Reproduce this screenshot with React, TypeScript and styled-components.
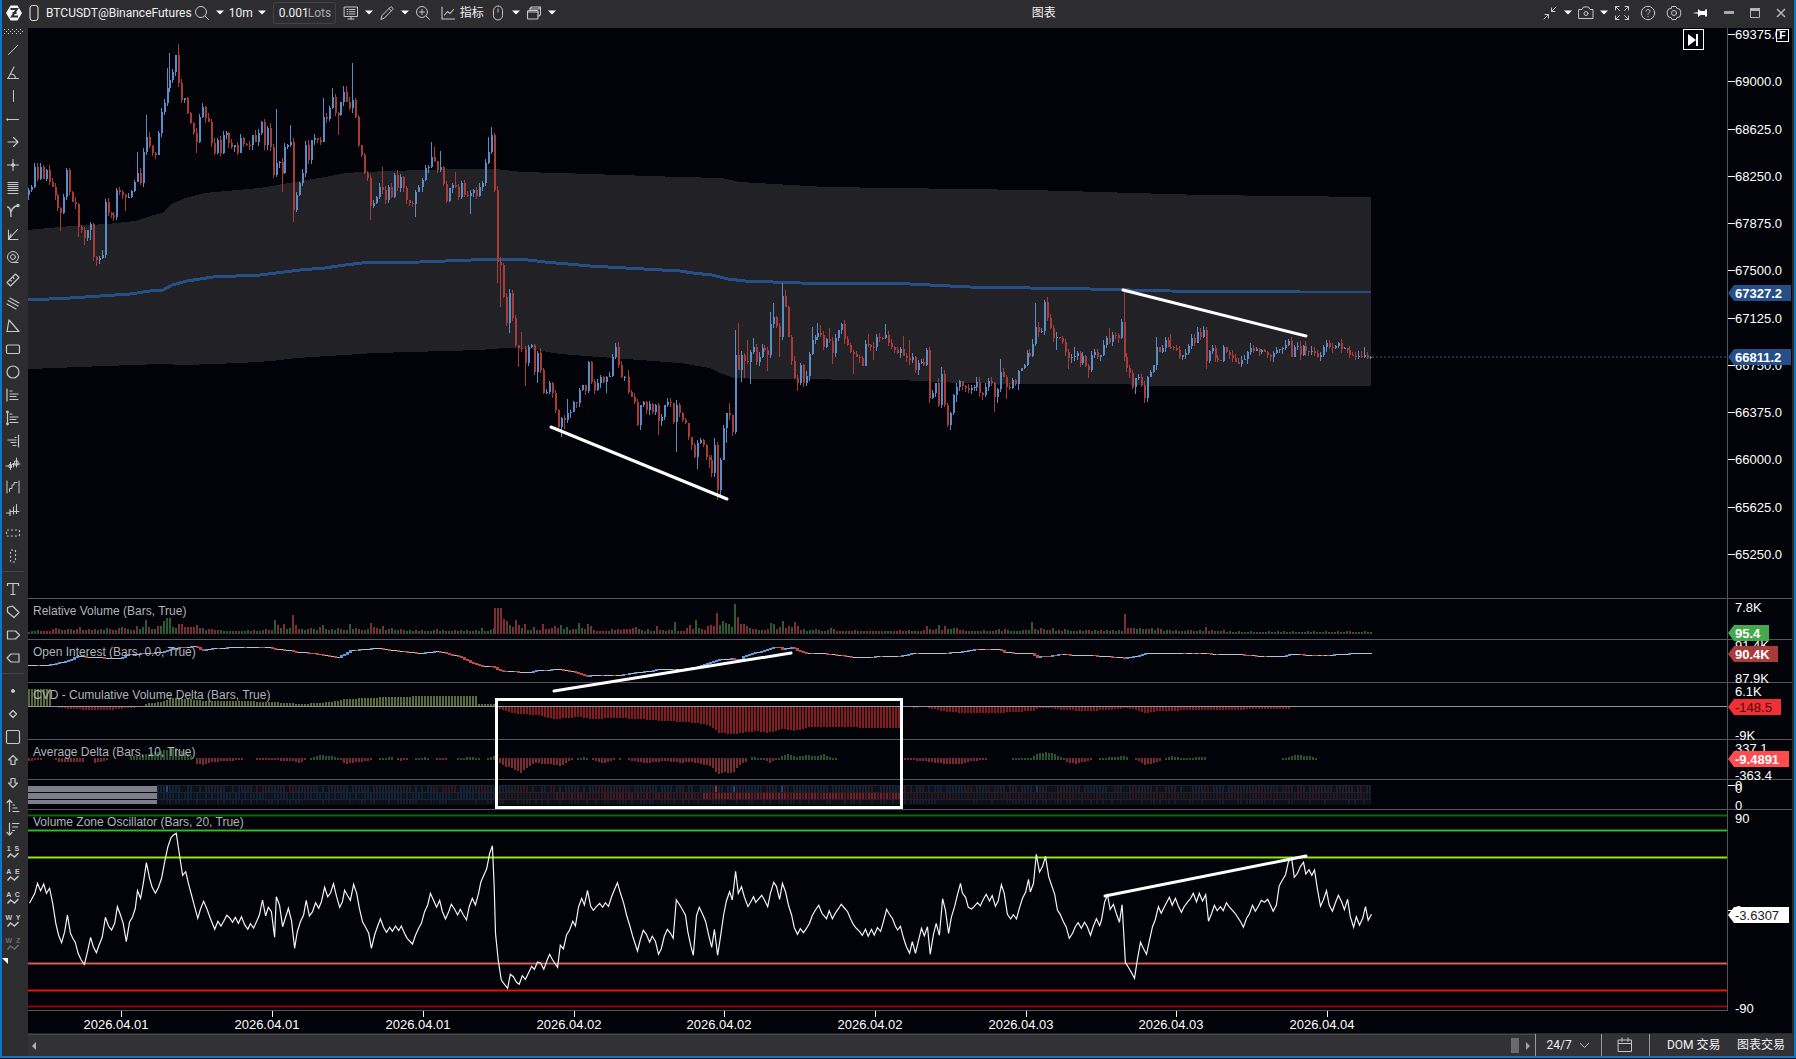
import React from "react";
import styled, { createGlobalStyle, css } from "styled-components";

/* ------------------------------------------------------------------ */
/* Theme                                                               */
/* ------------------------------------------------------------------ */

const color = {
  accent: "#0a78c8",
  chrome: "#2d2d30",
  status: "#323236",
  canvas: "#020308",
  line: "#55565c",
  icon: "#c6c6c8",
  up: "#5a8cc8",
  down: "#a83c38",
  band: "#222226",
  vwap: "#264f88",
};

const uiFont = `Roboto, "Noto Sans CJK SC", sans-serif`;
const chartFont = `"Liberation Sans", Arial, sans-serif`;

const GlobalStyle = createGlobalStyle`
  *, *::before, *::after { box-sizing: border-box; }
  body { margin: 0; background: #06121c; overflow: hidden; }
  button, input, select { font: inherit; color: inherit; margin: 0; }
`;

/* ------------------------------------------------------------------ */
/* Series data                                                         */
/* ------------------------------------------------------------------ */

type Point = [number, number];

const parsePoints = (src: string, x0 = 0, sx = 1, y0 = 0, sy = 1): Point[] =>
  src
    .trim()
    .split(/\s+/)
    .map((p) => {
      const [x, y] = p.split(",").map(Number);
      return [x0 + x / sx, y0 + y / sy] as Point;
    });

const toPath = (pts: Point[]) => pts.map(([x, y]) => `${x.toFixed(1)},${y.toFixed(1)}`).join(" ");

const sample = (pts: Point[], x: number) => {
  if (x <= pts[0][0]) return pts[0][1];
  for (let i = 1; i < pts.length; i++) {
    if (x <= pts[i][0]) {
      const [xa, ya] = pts[i - 1];
      const [xb, yb] = pts[i];
      return ya + ((yb - ya) * (x - xa)) / (xb - xa || 1);
    }
  }
  return pts[pts.length - 1][1];
};

const noise = (n: number) => {
  const v = Math.sin(n * 12.9898 + 4.1) * 43758.5453;
  return v - Math.floor(v);
};

/* Closes are in thirds of a pixel below `top`; ^ sets the high, _ sets the low. */
interface Run {
  from: number;
  to: number;
  top: number;
  closes: string;
}

const runs: Run[] = [
  {
    from: 28,
    to: 367,
    top: 0,
    closes: `570_601 560 500 538 500 538 510 545 560 585 625 640_692 590 510 575 605 612 680_712 690 715_735 690 672_720
      770 780_798 775 765 605 640 645 650 570 575 585 590_632 590 572 545 518^455 550 455 410^345 438 458 465 400
      335 310 265^205 240^160 215 165 250^133 300 295 340 370 400 425_460 350 320 355 365 430 460 420 460 405 400
      430 440 436 460 415 432 435 436 405 425 400 365 435 385 440 525 490^328 485 520_575 440 435 425^375
      630_665 585 550 520 435 480 420 415 420 425 350^295 358 325 290^265 340 345_405 305 275^258 305^258 325 300^190
      350 435 465 520 535`,
  },
  {
    from: 370,
    to: 679,
    top: 80,
    closes: `378_420 370 350 320 330^262 360 320 350 285 325 290 325 360 368 372 335_410 322 300 265 262 230^187 243^200
      270 260^212 312 362 325 315 320^275 350 310 345 348 340_402 330 348 320 310 250 215^170 165^140 330
      545_610 555_680 650 730 640_760 715 795 805_862 808^755 850_917 800 795 875 820_910 870 940 935 910 940 990
      1040 1015_1070 1020_1048 1000^957 995 965 968 930 915 932 845 905 930 910 890 905 890_940 888 830 800 855 890
      890 935^870 950 965 1035 975 965 990 972 995 975 1022_1065 1010 975 965 970 1025 975_1115 1000`,
  },
  {
    from: 682,
    to: 1056,
    top: 250,
    closes: `510 520 560 585 620 580_658 570 585 622 630_655 670 585^565 720_750 630_735 535 490_580 495^460 545
      315^240 360^220 315_395 333_385 335^270 305_403 290^265 335 320 295 300 315_362 222^187 200^158 228 260_320
      138^100 170^120 260 332 385 400_422 345 400 378 312 270^232 262 248^218 255^225 290 268 272^235 308_342 265 240
      222 268 285 305 312_372 320 325 348 282 285^252 290 292_330 262 264 265 255^222 280 292 300 310 298 318^258 325
      330^270 320 360 338 335 345 300 445_458 430 400 465 372^352 465 525 490_540 435 410_455 393 408 415 420 413 412
      395 430 435_450 410 393 400 440_485 418_460 365^328 380 410_448 415 390 402 362_420 355 345 310 318 282 230^158
      245 243 155^150 205 235 265 262_300`,
  },
  {
    from: 1059,
    to: 1370,
    top: 260,
    closes: `235 245 275 295_328 290 289^262 280 308 288 318 330_355 285 277 290 285 255 235 245^205 225 226 235 185
      290^95 325 340 380 355_402 350 375 415 352 335 315 262^232 275 265 240 260 262^222 265 270 292 285 280 258 235
      250 215^200 230 210 302_328 272 265 295 300 302 262 275 285 295 305 312 300 298 275 265 272 268 275 270 275
      285 292 280 270 268 265 255 242 290 262 258 285 258 272 274 272 278 292 284 262 248 262 265 258 250 268 265 270
      285 288 290 288 290 285^262 295 292`,
  },
];

interface Candle {
  x: number;
  open: number;
  close: number;
  high: number;
  low: number;
}

const candles: Candle[] = (() => {
  const out: Candle[] = [];
  let prev = 195;
  runs.forEach((run) => {
    const items = run.closes.trim().split(/\s+/);
    const step = (run.to - run.from) / (items.length - 1);
    items.forEach((item, i) => {
      const m = /^(\d+)([\^_])?(\d+)?$/.exec(item)!;
      const close = run.top + Number(m[1]) / 3;
      const n = out.length;
      let high = Math.min(prev, close) - noise(n) * 5;
      let low = Math.max(prev, close) + noise(n + 700) * 5;
      if (m[2] === "^") high = run.top + Number(m[3]) / 3;
      if (m[2] === "_") low = run.top + Number(m[3]) / 3;
      out.push({ x: Math.round(run.from + i * step), open: prev, close, high, low });
      prev = close;
    });
  });
  return out;
})();

const bandTop = parsePoints(`28,230 71,226 107,224 135,221 150,216 162,213 170,205 185,198 205,193 215,192 260,188 295,182
  325,177 345,173 362,172 420,170 460,169 495,169 522,172 560,173 680,177 722,178 740,182 825,187 1031,190 1203,195 1371,197`);
const bandBottom = parsePoints(`28,369 55,368 78,367 133,365 160,364 185,365 240,363 272,361 297,358 375,353 480,350 505,348
  530,349 560,354 600,357 680,363 710,368 722,374 735,378 760,379 900,380 960,383 1010,384 1125,384 1145,386 1371,386`);
const vwap = parsePoints(`28,300 70,298 100,296 130,294 150,291 163,290 172,285 187,281 213,277 260,275 300,270 325,268 345,265
  362,263 420,262 497,259 520,259 545,262 590,266 680,271 693,273 712,275 728,279 745,281 800,283 910,284 970,287 1030,288
  1090,289 1170,291 1300,292 1371,292`);

/* Bar heights in pixels; negative bars are sellers. */
const volumeLeft = `1 2 2 3 -2 -2 -2 -2 -4 -5 -4 3 -3 4 -4 3 -4 -6 3 -3 -4 3 -4 3 -4 3 5 -4 -3 3 -5 6 -5 4 -3 3 -7 4 6 13 -6 4 4 -7 7 12
  15 15 6 5 -9 -9 -6 -6 -6 -6 -8 5 -5 3 -4 -4 -3 -3 3 2 2 2 2 2 -2 2 2 3 2 -3 2 2 -3 4 -3 3 13 -8 5 -9 4 5 -18 -8 -4 4 3 4 -5 4 3
  -6 8 4 -3 4 3 5 -4 -3 3 9 4 -5 4 -3 3 4 -10 -6 -5 4 -7 3 -4 5 3 3 -4 3 2 3 2 -3 2 3 -2 2 2 3 -4 2 3 -2 2 2 -3 2 3 2 3 -2 2 3 2 5
  2 2 3 5 5`;
const volumeMid = `-25 -25 -25 -14 -12 8 -6 -13 -8 5 -9 3 3 -6 3 -3 -9 -4 -4 -5 -7 -5 8 4 6 3 -4 4 10 5 -4 9 -7 -3 -2 -2 -2 -2 2 -4 3 -4 -3 -4 -4
  -4 -5 -6 4 3 -2 4 -2 2 -7 3 -3 2 -3 3 11 -2 -2 -2 -5 -8 -4 13 5 -4 -3 -7 -8 -7 -20 8 12 10 9 6 29 -16 -9 -9 -7 5 -4 -4 3 3 -3
  -4 10 9 -4 -6 12 -5 -7 6 -11 -7 -3 4 2 3 3 -4 3 2 2 -3 5 4 -2 -2 2 -2 -2 2 -3 2 -2 2 -2 2 -2 -2 2 -2 2 2 2 -2 -2 2 -3 -2 -3 2 -3`;
const volumeRight = `-3 -2 -2 3 -2 2 -2 2 -3 -7 4 -3 -4 8 -3 -7 4 4 5 -5 -3 -3 2 -2 2 2 2 -2 3 2 -2 2 -3 4 2 -4 3 2 2 2 2 3 -3 3 11 -4 3 -5 4 -3 -3 5 2 -3
  2 -4 3 2 2 -2 3 2 -3 -3 2 3 2 -3 2 3 2 -3 2 3 2 -19 -5 -5 -5 4 5 -4 4 -4 5 3 -5 4 2 3 -3 2 3 -2 2 2 3 -3 2 2 3 2 -6 2 -3 2 2 2 -3
  1 2 1 -1 2 1 1 1 2 1 1 1 -1 1 2 1 -1 2 -1 2 1 1 2 -1 1 1 -1 2 1 2 -1 1 1 2 1 -1 1 -2 1 1 2 -2 1 1 1 -1 2 1 1 2 1 1 -1 1`;

const parseBars = (src: string, from: number, until: number) =>
  src
    .trim()
    .split(/\s+/)
    .map((h, i) => ({ x: from + i * 3, h: Number(h) }))
    .filter((b) => b.x < until);

const volumeBars = [
  ...parseBars(volumeLeft, 28, 494),
  ...parseBars(volumeMid, 494, 899),
  ...parseBars(volumeRight, 899, 1372),
];

const openInterest: Point[] = [
  ...parsePoints(
    "86,286 110,285 160,283 180,278 215,268 235,258 300,262 370,264 385,252 430,250 450,250 490,245 530,233 590,228 610,240 645,235 720,230 815,230 830,237 870,240 900,246",
    0, 3, 570, 3
  ),
  ...parsePoints("315,653 340,657 352,650 378,648 420,653 440,651 460,656"),
  ...parsePoints(
    "0,226 45,228 60,240 100,244 150,246 180,240 240,237 290,245 325,257 370,254 425,255 470,246 510,243 545,236 610,237 650,230 685,220 720,208 765,205 780,210 800,195 850,182 900,168 910,178 940,170 960,182 990,190 1040,190 1090,196 1120,200 1250,199",
    480, 3, 590, 3
  ),
  ...parsePoints(
    "0,199 40,190 120,190 150,188 180,185 230,178 305,178 320,187 400,189 412,200 450,198 480,193 550,194 620,198 680,203 720,197 740,190 920,190 980,192 1050,194 1070,197 1160,197 1170,193 1260,194 1340,193 1350,190 1415,190",
    900, 3, 590, 3
  ),
];

/* Envelope of the cumulative delta: positive grows up, negative down. */
const cvd = parsePoints(`28,17 50,17 51,0 55,0 56,-1 90,-3 110,-3 125,-1 142,0 143,2 160,4 170,8 185,7 205,5 240,5 270,4 300,2 330,4 345,7
  390,9 430,10 475,10 476,2 494,2 496,-1 507,-5 520,-7 537,-8 547,-11 557,-12 577,-10 590,-12 613,-11 637,-12 663,-14 683,-15 703,-17
  713,-21 717,-26 733,-27 757,-24 767,-26 783,-22 793,-24 810,-20 902,-21 903,0 911,0 914,-1 922,0 928,-1 940,-4 960,-6 997,-6 1033,-4
  1037,-1 1050,-1 1060,-3 1087,-4 1107,-3 1127,-1 1137,-4 1145,-6 1157,-4 1200,-3 1287,-2 1290,-1 1292,0 1371,0`);
const averageDelta = parsePoints(`28,-2 40,-1 44,0 54,0 56,-3 83,-3 85,0 91,0 94,-4 104,-2 110,0 128,0 130,3 140,3 150,6 165,9 172,12 180,8 190,3 193,0
  196,-5 203,-6 212,-3 240,-1 244,0 290,-2 300,-4 306,0 320,4 335,2 345,-5 365,-2 375,0 390,2 400,-2 410,0 425,2 430,0 440,-1 452,0 470,2 484,0
  494,3 495,-2 503,-7 513,-10 520,-14 526,-9 533,-4 547,-5 560,-7 567,-3 572,0 584,2 590,0 594,-2 603,-4 612,-1 618,1 625,0 632,-2 645,-4 655,-3
  665,-2 680,-4 688,-3 700,-5 710,-7 717,-15 725,-13 732,-15 737,-7 745,-3 750,2 763,1 768,-4 775,-1 780,3 787,5 795,2 808,4 816,2 822,5 832,1
  840,0 900,0 905,-1 925,-2 935,-4 945,-5 960,-5 970,-2 985,-1 990,0 1030,1 1036,5 1045,7 1053,5 1063,1 1066,-3 1075,-5 1090,-1 1100,1 1123,3
  1130,0 1138,-2 1143,-6 1155,-4 1160,-1 1170,3 1180,1 1205,2 1207,0 1275,0 1285,1 1295,4 1310,3 1317,0 1371,0`);

const oscillator: Point[] = [
  ...parsePoints(
    `66,310 78,280 84,250 91,272 98,252 104,280 111,265 118,310 125,370 131,405 138,428 145,395 151,345 158,400 163,415 169,428
    175,460 182,480 189,493 196,455 203,412 209,440 216,458 222,435 229,412 236,352 243,378 250,390 257,370 263,320 270,345 276,370
    283,425 290,367 297,350 303,325 308,272 315,295 321,250 328,188 335,235 341,262 348,280 355,262 362,235 369,185 376,140 383,113
    388,106 395,100 402,165 409,226 416,215 422,250 429,285 436,320 443,355 449,328 456,304 463,325 471,355 481,388 488,364 495,378
    501,364 508,346 514,353 521,367 527,352 534,370 541,350 548,374 555,388 561,371 568,384 575,364 581,345 588,300 595,348 601,322
    608,335 615,412 619,290 626,315 633,380 640,350 646,325 653,362 660,445 666,395 673,365 680,345 686,301 693,348 700,335 707,308
    714,325 720,305 727,262 734,290 740,280 747,251 754,290 761,322 767,305 772,271 779,288 785,301 792,253 799,280 805,325 812,365
    819,382 826,400 832,445 839,405 846,378 852,356 859,382 866,397 873,382 879,394 886,378 893,392 899,378 906,400 912,415 924,432
    931,405 938,385 944,370 951,335 958,315 964,280 971,301 978,322 985,301 991,335 998,357 1005,335 1011,313 1018,327 1025,345
    1031,328 1038,345 1045,360 1051,320 1058,295 1065,315 1072,280 1077,247 1084,225 1090,207 1097,160 1103,137 1107,260 1110,400
    1116,480 1123,540 1130,553 1137,565 1143,523 1150,530 1157,547 1163,553 1170,527 1177,538 1184,518 1191,499 1197,508 1204,486
    1211,489 1218,508 1225,482 1231,463 1238,480 1249,502 1255,436 1262,447 1269,405 1276,390 1283,364 1289,378 1296,320 1303,295
    1309,315 1316,271 1323,318 1329,331 1336,320 1343,310 1350,322 1356,308 1363,319 1370,290 1376,270 1383,248 1390,280 1397,310
    1404,348 1411,378 1418,412 1428,453 1434,420 1441,391 1448,403 1455,427 1461,409 1468,424 1475,463 1481,447 1488,409 1495,388
    1502,400 1508,415 1515,299`,
    0, 2.24, 800, 3
  ),
  ...parsePoints(
    `0,316 12,346 17,395 24,440 29,466 36,347 42,322 49,342 56,365 62,403 69,442 75,388 82,466 88,412 95,345 101,303 108,275 114,300
    121,214 127,280 134,260 140,290 148,320 154,306 160,290 165,307 178,286 184,300 191,320 197,280 204,247 210,259 217,298 223,250
    230,276 236,315 243,345 249,383 256,403 262,386 269,398 275,386 282,370 288,347 295,330 302,316 309,340 319,356 325,332 332,356
    338,340 345,326 351,313 358,324 365,335 371,355 378,375 384,385 391,394 397,406 404,388 410,409 417,388 423,405 430,383 437,394
    443,365 450,328 456,343 463,356 469,378 474,390 480,379 487,415 493,440 500,460 506,425 513,460 519,424 526,385 532,407 539,380
    545,463 552,404 558,370 565,406 572,296 578,330 585,400 591,352 598,320 604,286 611,250 615,279 622,292 628,322 635,327 641,319
    648,308 654,318 660,300 667,283 674,303 680,287 687,319 693,303 700,254 706,280 713,343 720,357 726,344 733,357 739,325 746,295
    753,276 759,238 763,276 770,250 776,163 783,216 790,198 796,169 803,230 809,254 816,283 822,330 828,343 835,365 841,380 848,415
    855,400 861,380 867,368 874,385 881,367 887,380 894,406 900,380 907,356 914,377 918,360 925,305 931,285 937,328 944,313 950,340
    957,367 963,314 970,488 976,500 983,517 990,535 996,480 1003,427 1009,445 1016,463 1022,425 1029,380 1035,360 1042,320 1048,340
    1055,320 1066,292 1072,316 1079,295 1085,317 1092,337 1098,320 1105,307 1112,295 1118,280 1125,306 1131,280 1138,303 1145,284
    1151,364 1158,340 1164,316 1170,332 1177,320 1183,332 1190,308 1196,320 1209,340 1215,353 1221,365 1227,382 1234,355 1240,342
    1247,316 1253,334 1260,318 1266,301 1273,307 1280,298 1286,315 1292,334 1299,315 1305,258 1312,240 1319,224 1325,185 1332,174
    1338,232 1345,220 1351,200 1358,187 1363,222 1370,209 1376,226 1382,210 1388,265 1395,319 1401,300 1408,272 1414,315 1421,334
    1427,310 1434,286 1441,305 1447,329 1454,298 1460,350 1467,382 1473,350 1480,376 1487,355 1493,320 1499,361 1506,343`,
    680, 2.178, 800, 3
  ),
];

const barSlots = Array.from({ length: 448 }, (_, i) => 28 + i * 3);

/* ------------------------------------------------------------------ */
/* Layout                                                              */
/* ------------------------------------------------------------------ */

const Desktop = styled.div`
  display: flex;
  height: 100vh;
  padding-bottom: 1px;
  background: #06121c;
  font-family: ${uiFont};
  font-size: 12px;
  color: #f0f0f0;
`;

const Window = styled.main`
  flex: 1;
  display: flex;
  flex-direction: column;
  min-width: 0;
  border: solid ${color.accent};
  border-width: 0 2px 2px;
  background: ${color.chrome};
`;

const TitleBar = styled.header`
  flex: none;
  display: flex;
  align-items: center;
  height: 28px;
  padding: 0 0 3px 1px;
  background: ${color.chrome};
  white-space: nowrap;
`;

const Title = styled.h1`
  flex: 1;
  margin: 0;
  padding-right: 14px;
  font-size: 12px;
  font-weight: 400;
  line-height: 20px;
  text-align: center;
`;

const IconButton = styled.button<{ $w?: number; $gap?: number }>`
  flex: none;
  display: flex;
  align-items: center;
  justify-content: center;
  width: ${(p) => p.$w ?? 18}px;
  height: 22px;
  margin-left: ${(p) => p.$gap ?? 0}px;
  padding: 0;
  border: 0;
  background: none;
  color: ${color.icon};
`;

const TextButton = styled.button<{ $gap?: number; $min?: number }>`
  min-width: ${(p) => p.$min ?? 0}px;
  height: 22px;
  margin-left: ${(p) => p.$gap ?? 0}px;
  padding: 0;
  border: 0;
  background: none;
  line-height: 20px;
  text-align: left;
  white-space: nowrap;
`;

const PlainSelect = styled.select<{ $w: number }>`
  appearance: none;
  width: ${(p) => p.$w}px;
  height: 20px;
  padding: 0;
  border: 0;
  background: none;
  line-height: 20px;
`;

const LotField = styled.label`
  display: flex;
  align-items: center;
  width: 63px;
  height: 22px;
  margin: 0 6px 0 2px;
  padding: 0 5px;
  border: 1px solid #414147;
  border-radius: 3px;
  color: #a8a8aa;
`;

const LotInput = styled.input`
  width: 29px;
  padding: 0;
  border: 0;
  background: none;
  color: #f0f0f0;
`;

const Body = styled.div`
  flex: 1;
  display: flex;
  min-height: 0;
`;

const ToolRail = styled.nav`
  flex: none;
  display: flex;
  flex-direction: column;
  width: 26px;
  padding: 1px 4px 0 0;
  background: ${color.chrome};
`;

const dots = "repeating-linear-gradient(90deg, #d0d0d0 0 1px, transparent 1px 4px)";

const Grip = styled.div`
  height: 5px;
  margin: 0 0 4px 2px;
  background-image: ${dots}, ${dots}, ${dots};
  background-repeat: no-repeat;
  background-size: 17px 1px;
  background-position: 0 0, 2px 2px, 0 4px;
`;

const ToolGroup = styled.div`
  display: flex;
  flex-direction: column;
  & + & {
    margin-top: 4px;
    padding-top: 5px;
    border-top: 1px solid #44444a;
  }
`;

const ToolButton = styled.button<{ $dim?: boolean }>`
  display: flex;
  flex-direction: column;
  align-items: center;
  justify-content: center;
  height: 23px;
  padding: 0;
  border: 0;
  background: none;
  color: ${(p) => (p.$dim ? "#6c6c70" : "#c8c8ca")};
  font: 700 7px/7px ${chartFont};
  white-space: pre;
`;

const ChartColumn = styled.section`
  position: relative;
  flex: 1;
  display: flex;
  flex-direction: column;
  min-width: 0;
  margin-right: 2px;
  background: ${color.canvas};
`;

const Pane = styled.div<{ $h?: number }>`
  display: flex;
  min-height: 0;
  ${(p) =>
    p.$h
      ? css`
          flex: none;
          height: ${p.$h}px;
          border-top: 1px solid ${color.line};
        `
      : css`
          flex: 1;
        `}
`;

const Plot = styled.div`
  position: relative;
  flex: 1;
  min-width: 0;
  border-right: 1px solid ${color.line};
`;

const PlotSvg = styled.svg`
  display: block;
  width: 100%;
  height: 100%;
`;

const PaneTitle = styled.h2`
  position: absolute;
  top: 4px;
  left: 5px;
  margin: 0;
  font: 400 12px/16px ${chartFont};
  color: #b0b2b8;
`;

const Scale = styled.svg`
  position: relative;
  z-index: 1;
  flex: none;
  width: 64px;
  height: 100%;
  overflow: visible;
  font: 400 13px ${chartFont};
  fill: #ffffff;
`;

const Markup = styled.svg`
  position: absolute;
  inset: 0;
  width: 100%;
  height: 100%;
  pointer-events: none;
`;

const JumpButton = styled.button`
  position: absolute;
  top: 1px;
  right: 88px;
  display: flex;
  align-items: center;
  justify-content: center;
  width: 21px;
  height: 21px;
  padding: 0;
  border: 1px solid #ffffff;
  background: ${color.canvas};
`;

const FixButton = styled.button`
  position: absolute;
  z-index: 2;
  top: 1px;
  right: 3px;
  width: 13px;
  height: 13px;
  padding: 0;
  border: 1px solid #ffffff;
  background: rgba(2, 3, 8, 0.4);
  font: 700 10px/11px ${chartFont};
  color: #ffffff;
`;

const TimeAxis = styled.div`
  flex: none;
  height: 23px;
  padding-right: 64px;
`;

const TimeSvg = styled.svg`
  display: block;
  width: 100%;
  height: 23px;
  border-top: 1px solid ${color.line};
  font: 400 13px ${chartFont};
  fill: #ffffff;
`;

const StatusBar = styled.footer`
  flex: none;
  display: flex;
  height: 23px;
  margin-right: -2px;
  border-top: 1px solid #28282b;
  background: ${color.status};
`;

const ScrollTrack = styled.div`
  flex: 1;
  display: flex;
  align-items: center;
  padding: 0 3px 0 2px;
  border-top: 1px solid #48484c;
`;

const ScrollThumb = styled.div`
  width: 8px;
  height: 15px;
  margin-left: auto;
  background: #6a6a6e;
`;

const StatusCell = styled.div<{ $w: number }>`
  display: flex;
  align-items: center;
  justify-content: center;
  gap: 5px;
  width: ${(p) => p.$w}px;
  border-left: 1px solid #9a9a9e;
`;

const TradeLinks = styled.div`
  display: flex;
  align-items: center;
  gap: 14px;
  padding: 0 9px 0 17px;
  border-left: 1px solid #9a9a9e;
`;

/* ------------------------------------------------------------------ */
/* Icons                                                               */
/* ------------------------------------------------------------------ */

const Glyph = ({ d, size = 16, w = 1, fill = "none", children }: {
  d?: string; size?: number; w?: number; fill?: string; children?: React.ReactNode;
}) => (
  <svg width={size} height={size} viewBox="0 0 16 16" fill={fill} stroke="currentColor" strokeWidth={w} strokeLinecap="round" strokeLinejoin="round" aria-hidden="true">
    {d && <path d={d} />}
    {children}
  </svg>
);

const Caret = ({ label, w }: { label: string; w?: number }) => (
  <IconButton aria-label={label} $w={w}>
    <svg width="8" height="5" viewBox="0 0 8 5" aria-hidden="true">
      <path d="M0 0.5h8L4 4.5z" fill="#fff" />
    </svg>
  </IconButton>
);

const wave = "M2.5 5.5 L5.5 2 L9.5 5 L13.5 1";

const drawingTools: { label: string; icon: React.ReactNode }[] = [
  { label: "Line", icon: <Glyph d="M3.5 12.5l9-9" /> },
  { label: "Angle", icon: <Glyph d="M3 13.5L9 2M2.5 13.5h11M5.5 9c3 0 5 1.5 5 4.500" w={1.1} /> },
  { label: "Vertical", icon: <Glyph d="M8.5 2.5v11" /> },
  { label: "Horizontal", icon: <Glyph d="M2.5 8.5h11"><circle cx="2.5" cy="8.5" r=".8" fill="currentColor" /></Glyph> },
  { label: "Arrow", icon: <Glyph d="M3 8h10M8.5 3.5L13 8l-4.5 4.5" w={1.1} /> },
  { label: "Cross", icon: <Glyph d="M8 2.5v11M2.5 8h11"><circle cx="8" cy="8" r="1.4" fill="currentColor" /></Glyph> },
  { label: "Fibonacci", icon: <Glyph d="M3 2.5h10M3 4.5h10M3 6.5h10M3 8.5h10M3 10.5h10M3 13.5h10" /> },
  { label: "Curve", icon: <Glyph d="M2.5 4c3 0 3.500 4 3.500 9.5M6 9c1-4 4-6 7-6.5" w={1.3}><circle cx="13" cy="2.5" r="1" /></Glyph> },
  { label: "Fan", icon: <Glyph d="M3.5 4v9.5H13M3.5 13.500l9-10M6 8l-2.500 5.500" w={1.1} /> },
  { label: "Circles", icon: <Glyph d="M8 13.500h5"><circle cx="8" cy="8" r="5.5" /><circle cx="8" cy="8" r="2.5" /></Glyph> },
  { label: "Ruler", icon: <Glyph d="M2 10.5l8.5-8.5 3.500 3.500L5.5 14zM5 7.500l1.500 1.500M7.500 5l1.500 1.500" w={1.1} /> },
  { label: "Parallel", icon: <Glyph d="M5 3l9 5M3 5.500l10 5.500M2 9l9 5" w={1.1} /> },
  { label: "Triangle", icon: <Glyph d="M4 2L2 13.500h12z" w={1.2} /> },
  { label: "Rectangle", icon: <Glyph w={1.2}><rect x="1.5" y="4" width="13" height="8.5" rx="1.5" /></Glyph> },
  { label: "Ellipse", icon: <Glyph w={1.2}><circle cx="8" cy="8" r="6" /></Glyph> },
  { label: "Profile", icon: <Glyph d="M2 2v12M5 4h2M5 7h8M5 9.5h6M5 12.5h8" w={1.2} /> },
  { label: "Fixed profile", icon: <Glyph d="M2.5 2v12M5 4h2M5 7h8M5 9.5h6M5 12.5h8" w={1.2}><circle cx="2.5" cy="2" r=".8" /><circle cx="2.5" cy="14" r=".8" /></Glyph> },
  { label: "Right profile", icon: <Glyph d="M13.5 2v12M11 4.5h-1M11 7H3M11 9.5H6M11 12.5H8" w={1.2} /> },
  { label: "Bars", icon: <Glyph d="M1 10h3M5.5 6.500v7M11.500 2v9M9 8h6M4.500 8.500h2v3h-2zM10 5h3v4h-3zM6.500 9.500L8.500 7v4" /> },
  { label: "Steps", icon: <Glyph d="M2 2v12M14 2v12M4.5 12.5V9.5H7V6h2V3.5h3" /> },
  { label: "Cluster", icon: <Glyph d="M1.5 11h4M5 7.5v6M5 9.5h9M8.5 5v7M11.5 2.5v9" w={1.1} /> },
  { label: "Wide range", icon: <Glyph w={1.2}><rect x="1.5" y="5" width="13" height="6" rx="1" strokeDasharray="1 3" /></Glyph> },
  { label: "Tall range", icon: <Glyph w={1.2}><rect x="5.5" y="2" width="5" height="12" rx="1" strokeDasharray="1 3" /></Glyph> },
];

const labelTools: { label: string; icon: React.ReactNode }[] = [
  { label: "Text", icon: <Glyph d="M2.5 4.500v-2h11v2M8 2.500v11M6 13.500h4" w={1.2} /> },
  { label: "Tag", icon: <Glyph d="M2.5 3.500l5-1.500 6.500 6.500-5 5L2.500 8z" w={1.2} /> },
  { label: "Right label", icon: <Glyph d="M2.5 4h8l4 4-4 4h-8z" w={1.2} /> },
  { label: "Left label", icon: <Glyph d="M14 4H6L2 8l4 4h8z" w={1.2} /> },
];

const markTools: { label: string; icon: React.ReactNode }[] = [
  { label: "Dot", icon: <Glyph fill="currentColor"><circle cx="8" cy="8" r="1.5" /></Glyph> },
  { label: "Diamond", icon: <Glyph d="M8 4.500L11.500 8 8 11.500 4.500 8z" w={1.2} /> },
  { label: "Square", icon: <Glyph w={1.2}><rect x="1.5" y="1.5" width="13" height="13" rx="1.5" /></Glyph> },
  { label: "Up", icon: <Glyph d="M8 3.500L3.500 8h2.500v4.500h4V8h2.500z" w={1.2} /> },
  { label: "Down", icon: <Glyph d="M8 12.500L3.500 8h2.500V3.500h4V8h2.500z" w={1.2} /> },
  { label: "Sort up", icon: <Glyph d="M4.500 13.500V2M2 4.500L4.500 2 7 4.500M8 7h1.500M8 10h4M8 13.500h6" w={1.2} /> },
  { label: "Sort down", icon: <Glyph d="M4.500 2v12M2 11.500L4.500 14 7 11.500M7.500 2.500H14M7.500 6h5M7.500 9.500h2" w={1.2} /> },
];

const waveTools = ["1  S", "A  E", "A  C", "W  Y", "W  Z"];

const Logo = () => (
  <svg width="18" height="18" viewBox="0 0 18 18" aria-hidden="true">
    <path d="M5.500 1.500h7L17 9l-4.500 7.500h-7L1 9z" fill="#f4f4f4" />
    <path d="M5.500 5h6.500L7 12.500h6M7.500 9h4" fill="none" stroke="#2d2d30" strokeWidth="2" />
  </svg>
);

/* ------------------------------------------------------------------ */
/* Scale parts                                                         */
/* ------------------------------------------------------------------ */

const ScaleText = ({ y, children, tick }: { y: number; children: string; tick?: boolean }) => (
  <g>
    {tick && <rect x="0" y={y} width="7" height="1" />}
    <text x="7" y={y + 5}>{children}</text>
  </g>
);

const ScaleTag = ({ y, w, fill, ink = "#fff", light, children }: {
  y: number; w: number; fill: string; ink?: string; light?: boolean; children: string;
}) => (
  <g>
    <path d={`M0 ${y}l6 -8h${w - 6}v16h${6 - w}z`} fill={fill} />
    <text x="7" y={y + 5} fill={ink} fontWeight={light ? 400 : 700}>{children}</text>
  </g>
);

const PlotArea = ({ top, title, children }: { top: number; title?: string; children: React.ReactNode }) => (
  <Plot>
    <PlotSvg role="img" aria-label={title ?? "BTCUSDT price"}>
      <g transform={`translate(-28 ${-top})`} shapeRendering="crispEdges">{children}</g>
    </PlotSvg>
    {title && <PaneTitle>{title}</PaneTitle>}
  </Plot>
);

/* ------------------------------------------------------------------ */
/* Panes                                                               */
/* ------------------------------------------------------------------ */

const priceTicks = Array.from({ length: 12 }, (_, i) => ({
  label: (69375 - i * 375).toFixed(1),
  y: Math.round(6 + i * 47.27),
}));

const PricePane = () => (
  <Pane>
    <PlotArea top={28}>
      <polygon points={toPath([...bandTop, ...[...bandBottom].reverse()])} fill={color.band} />
      <polyline points={toPath(vwap)} fill="none" stroke={color.vwap} strokeWidth="3" />
      {candles.map((c, i) => {
        const top = Math.round(Math.min(c.open, c.close));
        const bottom = Math.round(Math.max(c.open, c.close));
        const high = Math.round(c.high);
        return (
          <g key={i} fill={c.close <= c.open ? color.up : color.down}>
            <rect x={c.x} y={high} width="1" height={Math.round(c.low) - high} />
            <rect x={c.x} y={top} width="2" height={Math.max(1, bottom - top)} />
          </g>
        );
      })}
      <line x1="1372" x2="4000" y1="357" y2="357" stroke="#1a2c46" strokeWidth="2" strokeDasharray="2 2" />
    </PlotArea>
    <Scale>
      {priceTicks.map((t) => (
        <ScaleText key={t.label} y={t.y} tick>{t.label}</ScaleText>
      ))}
      <ScaleTag y={265} w={63} fill={color.vwap}>67327.2</ScaleTag>
      <ScaleTag y={329} w={63} fill={color.vwap}>66811.2</ScaleTag>
    </Scale>
  </Pane>
);

const VolumePane = () => (
  <Pane $h={41}>
    <PlotArea top={599} title="Relative Volume (Bars, True)">
      {volumeBars.map((b, i) => (
        <rect key={i} x={b.x} y={633 - Math.abs(b.h)} width="2" height={Math.abs(b.h) + 1} fill={b.h < 0 ? "#7c2e34" : "#2c5a34"} />
      ))}
    </PlotArea>
    <Scale>
      <ScaleText y={8}>7.8K</ScaleText>
      <ScaleTag y={34} w={41} fill="#46a84c">95.4</ScaleTag>
    </Scale>
  </Pane>
);

const InterestPane = () => (
  <Pane $h={43}>
    <PlotArea top={640} title="Open Interest (Bars, 0.0, True)">
      {barSlots.map((x, i) => {
        const a = Math.round(sample(openInterest, x));
        const b = Math.round(sample(openInterest, x + 3));
        const flat = a === b;
        const tint = flat ? (noise(i) > 0.8 ? "#c05a5a" : "#b4c4d0") : b < a ? "#5f9ad8" : "#c0484a";
        return <rect key={x} x={x} y={Math.min(a, b)} width="3" height={Math.abs(a - b) + 1} fill={tint} />;
      })}
    </PlotArea>
    <Scale>
      <ScaleText y={5}>91.4K</ScaleText>
      <ScaleText y={38}>87.9K</ScaleText>
      <ScaleTag y={14} w={50} fill="#a83c3c">90.4K</ScaleTag>
    </Scale>
  </Pane>
);

const CumulativePane = () => (
  <Pane $h={57}>
    <PlotArea top={683} title="CVD - Cumulative Volume Delta (Bars, True)">
      {barSlots.map((x) => {
        const v = Math.round(sample(cvd, x));
        return v === 0 ? null : (
          <rect key={x} x={x} y={v > 0 ? 706 - v : 707} width="2" height={Math.abs(v)} fill={v > 0 ? "#5c6c38" : "#861c20"} />
        );
      })}
      <rect x="28" y="706" width="4000" height="1" fill="#94969a" />
    </PlotArea>
    <Scale>
      <ScaleText y={8}>6.1K</ScaleText>
      <ScaleText y={52}>-9K</ScaleText>
      <ScaleTag y={24} w={53} fill="#f03034" ink="#4a0808" light>-148.5</ScaleTag>
    </Scale>
  </Pane>
);

const AveragePane = () => (
  <Pane $h={40}>
    <PlotArea top={740} title="Average Delta (Bars, 10, True)">
      {barSlots.map((x) => {
        const v = Math.round(sample(averageDelta, x));
        return v === 0 ? null : (
          <rect key={x} x={x} y={v > 0 ? 759 - v : 758} width="2" height={Math.abs(v) + 1} fill={v > 0 ? "#2a5230" : "#7a2c32"} />
        );
      })}
    </PlotArea>
    <Scale>
      <ScaleText y={8}>337.1</ScaleText>
      <ScaleText y={35}>-363.4</ScaleText>
      <ScaleTag y={19} w={61} fill="#ff4c50">-9.4891</ScaleTag>
    </Scale>
  </Pane>
);

const heatRows = [
  { y: 786, h: 6 },
  { y: 793, h: 6 },
  { y: 800, h: 4 },
];

const heatPeaks: [number, string][] = [
  [166, "#2c4468"],
  [716, "#8c3448"],
  [734, "#2c4468"],
  [781, "#2c4468"],
  [1035, "#24344e"],
];

const heatFill = (x: number, row: number) => {
  const n = noise(x * 3 + row * 91);
  const peak = heatPeaks.find(([px]) => Math.abs(px - x) < 2);
  if (row === 0 && peak) return peak[1];
  if (row === 2) return n > 0.6 ? "#181c24" : "#101218";
  if (row === 1 && x > 700 && x < 902) return n > 0.3 ? "#7c1e24" : "#5c181e";
  if (row === 1 && x > 550 && x < 902) return n > 0.5 ? "#481820" : "#34141a";
  if (row === 1 && x > 496) return n > 0.5 ? "#30161c" : "#1c1820";
  if (row === 1) return n > 0.3 ? "#122236" : "#0e1824";
  return n > 0.72 ? "#34161e" : n > 0.2 ? "#142438" : "#0e141e";
};

const HeatPane = () => (
  <Pane $h={30}>
    <PlotArea top={780}>
      <rect x="157" y="785" width="1214" height="20" fill="#0b0e15" />
      {heatRows.map((r, row) => (
        <g key={r.y}>
          <rect x="28" y={r.y} width="129" height={r.h} fill="#7e7e8a" />
          <rect x="157" y={r.y - 1} width="1214" height="1" fill="#1a2230" />
          {barSlots.filter((x) => x > 156).map((x) => (
            <rect key={x} x={x} y={r.y} width="2" height={r.h} fill={heatFill(x, row)} />
          ))}
        </g>
      ))}
    </PlotArea>
    <Scale>
      <ScaleText y={5} tick>0</ScaleText>
      <ScaleText y={8}>0</ScaleText>
      <ScaleText y={25}>0</ScaleText>
    </Scale>
  </Pane>
);

const zones = [
  { y: 815, core: "#0a6a0c", edge: "#063206" },
  { y: 830, core: "#3cb43c", edge: "#125a12" },
  { y: 857, core: "#a0e020", edge: "#3c7a08" },
  { y: 963, core: "#d06464", edge: "#742a2a" },
  { y: 990, core: "#e01414", edge: "#780808" },
  { y: 1006, core: "#8c0a10", edge: "#460408" },
];

const OscillatorPane = () => (
  <Pane $h={201}>
    <PlotArea top={810} title="Volume Zone Oscillator (Bars, 20, True)">
      {zones.map((z) => (
        <g key={z.y}>
          <rect x="28" y={z.y - 1} width="4000" height="3" fill={z.edge} />
          <rect x="28" y={z.y} width="4000" height="1" fill={z.core} />
        </g>
      ))}
      <polyline points={toPath(oscillator)} fill="none" stroke="#f4f4f6" strokeWidth="1.2" shapeRendering="auto" />
    </PlotArea>
    <Scale>
      <ScaleText y={8}>90</ScaleText>
      <ScaleText y={100} tick>0</ScaleText>
      <ScaleText y={198}>-90</ScaleText>
      <ScaleTag y={105} w={61} fill="#ffffff" ink="#202024" light>-3.6307</ScaleTag>
    </Scale>
  </Pane>
);

const dateTicks: [number, string][] = [
  [93, "2026.04.01"], [244, "2026.04.01"], [395, "2026.04.01"], [546, "2026.04.02"], [696, "2026.04.02"],
  [847, "2026.04.02"], [998, "2026.04.03"], [1148, "2026.04.03"], [1299, "2026.04.04"],
];

/* ------------------------------------------------------------------ */
/* App                                                                 */
/* ------------------------------------------------------------------ */

const TopBar = () => (
  <TitleBar>
    <IconButton aria-label="Menu" $w={22}><Logo /></IconButton>
    <IconButton aria-label="Link group">
      <svg width="10" height="16" viewBox="0 0 10 16" aria-hidden="true"><rect x="1" y=".5" width="8" height="15" rx="2.5" fill="none" stroke="#f0f0f0" /></svg>
    </IconButton>
    <TextButton $gap={3} $min={141}>BTCUSDT@BinanceFutures</TextButton>
    <IconButton aria-label="Search" $gap={1}><Glyph><circle cx="7" cy="7" r="5.5" /><path d="M11 11l3.5 3.5" /></Glyph></IconButton>
    <Caret label="Symbols" />
    <PlainSelect $w={24} aria-label="Period" defaultValue="10m"><option>10m</option></PlainSelect>
    <Caret label="Periods" />
    <LotField>
      <LotInput defaultValue="0.001" aria-label="Lot size" />
      Lots
    </LotField>
    <IconButton aria-label="Display"><Glyph d="M1.5 2h13v9.5h-13zM4 4.500h1M6.500 4.500h5.500M4 6.700h1M6.500 6.700h5.500M4 9h1M6.500 9h5.500M8 11.500V14M5 14h6" /></IconButton>
    <Caret label="Display options" />
    <IconButton aria-label="Draw"><Glyph d="M2 14l1-3.500L11.500 2c1-.8 3 1.200 2.300 2.300L5.500 13zM10 3.500L12.500 6" /></IconButton>
    <Caret label="Draw options" />
    <IconButton aria-label="Zoom in"><Glyph d="M11 11l3.500 3.500M4.500 7h5M7 4.500v5"><circle cx="7" cy="7" r="5.5" /></Glyph></IconButton>
    <IconButton aria-label="Chart" $gap={7}><Glyph d="M2 2v12h12.500M4.500 10l3-3.500 2.500 2 3.500-4" w={1.1} /></IconButton>
    <TextButton $gap={3}>指标</TextButton>
    <IconButton aria-label="Mouse" $gap={5}><Glyph d="M8 4v3"><rect x="3.5" y="1" width="9" height="14" rx="4.5" /></Glyph></IconButton>
    <Caret label="Mouse options" />
    <IconButton aria-label="Templates">
      <Glyph d="M4 4.500V3.500L5.500 2h9v7.500L13 11h-1M4 4h9V2" w={1.1}>
        <rect x="1.5" y="5.5" width="10.5" height="8.5" rx="1" />
        <path d="M1.500 7h10.500" w="2" />
      </Glyph>
    </IconButton>
    <Caret label="Template options" />
    <Title>图表</Title>
    <IconButton aria-label="Shrink"><Glyph d="M14 2L9.500 6.500M9.500 3v3.500H13M2 14l4.500-4.500M3 9.500h3.500V13" /></IconButton>
    <Caret label="Shrink options" />
    <IconButton aria-label="Screenshot"><Glyph d="M1 4.500h3l1.500-2.500h5L12 4.500h3v9H1z"><circle cx="8" cy="8.5" r="2" /></Glyph></IconButton>
    <Caret label="Screenshot options" />
    <IconButton aria-label="Full screen"><Glyph d="M1.500 5V1.500H5M1.500 1.500l4 4M11 1.500h3.500V5M14.500 1.500l-4 4M1.500 11v3.500H5M1.500 14.500l4-4M11 14.500h3.500V11M14.500 14.500l-4-4" /></IconButton>
    <IconButton aria-label="Help" $w={26} $gap={4}><Glyph d="M6 6.200C6 3.800 10 4 10 6.200 10 7.700 8 7.500 8 9.300M8 11.300v.2"><circle cx="8" cy="8" r="6.7" /></Glyph></IconButton>
    <IconButton aria-label="Settings" $w={26}><Glyph d="M6 1.500h4l1 2 2.500.5 1.500 3-.7 1 .7 1-1.500 3-2.500.5-1 2H6l-1-2-2.500-.5L1 9l.7-1L1 7l1.500-3L5 3.500z"><circle cx="8" cy="8" r="2.5" /></Glyph></IconButton>
    <IconButton aria-label="Pin" $w={26}>
      <svg width="16" height="10" viewBox="0 0 16 10" aria-hidden="true"><path d="M0 5l6-.8V1l2.500 2h4.500V1.500h2v7h-2V7H8.500L6 9V5.800z" fill="#fff" /></svg>
    </IconButton>
    <IconButton aria-label="Minimize" $w={26} $gap={3}><svg width="10" height="3" aria-hidden="true"><rect width="10" height="3" fill="#a8a8aa" /></svg></IconButton>
    <IconButton aria-label="Maximize" $w={26}><svg width="10" height="10" aria-hidden="true"><path d="M.5 1v8.500h9V1" fill="none" stroke="#b4b4b6" /><rect width="10" height="3" fill="#b4b4b6" /></svg></IconButton>
    <IconButton aria-label="Close" $w={26}><svg width="10" height="10" aria-hidden="true"><path d="M1 1l8 8M9 1L1 9" stroke="#b4b4b6" strokeWidth="1.5" /></svg></IconButton>
  </TitleBar>
);

const Tools = () => (
  <ToolRail aria-label="Drawing tools">
    <Grip />
    {[drawingTools, labelTools].map((group, i) => (
      <ToolGroup key={i}>
        {group.map((t) => <ToolButton key={t.label} aria-label={t.label}>{t.icon}</ToolButton>)}
      </ToolGroup>
    ))}
    <ToolGroup>
      {markTools.map((t) => <ToolButton key={t.label} aria-label={t.label}>{t.icon}</ToolButton>)}
      {waveTools.map((t) => (
        <ToolButton key={t} $dim={t === "W  Z"}>
          {t}
          <svg width="16" height="7" viewBox="0 0 16 7" aria-hidden="true"><path d={wave} fill="none" stroke="currentColor" strokeWidth="1.5" /></svg>
        </ToolButton>
      ))}
    </ToolGroup>
    <svg width="6" height="9" aria-hidden="true"><path d="M0 3h6v6z" fill="#fff" /></svg>
  </ToolRail>
);

export default function App() {
  return (
    <Desktop>
      <GlobalStyle />
      <Window>
        <TopBar />
        <Body>
          <Tools />
          <ChartColumn>
            <PricePane />
            <VolumePane />
            <InterestPane />
            <CumulativePane />
            <AveragePane />
            <HeatPane />
            <OscillatorPane />
            <TimeAxis>
              <TimeSvg role="img" aria-label="Time axis">
                {dateTicks.map(([x, label]) => (
                  <g key={x}>
                    <rect x={x} y="0" width="1" height="6" />
                    <text x={x - 5} y="18" textAnchor="middle">{label}</text>
                  </g>
                ))}
              </TimeSvg>
            </TimeAxis>
            <StatusBar>
              <ScrollTrack>
                <svg width="7" height="8" aria-hidden="true"><path d="M6 0v8L2 4z" fill="#b0b0b4" /></svg>
                <ScrollThumb />
                <svg width="13" height="8" aria-hidden="true"><path d="M7 0v8l4-4z" fill="#a0a0a4" /></svg>
              </ScrollTrack>
              <StatusCell $w={66}>
                <PlainSelect $w={28} aria-label="Session" defaultValue="24/7"><option>24/7</option></PlainSelect>
                <svg width="11" height="7" aria-hidden="true"><path d="M1 1l4.500 4.500L10 1" fill="none" stroke="#c0c0c4" /></svg>
              </StatusCell>
              <StatusCell $w={48}>
                <IconButton aria-label="Calendar"><Glyph d="M1.500 3h13v11.500h-13zM1.500 6.500h13M5 1v3.500M11 1v3.500" /></IconButton>
              </StatusCell>
              <TradeLinks>
                <TextButton $min={56}>DOM 交易</TextButton>
                <TextButton>图表交易</TextButton>
              </TradeLinks>
            </StatusBar>
            <JumpButton aria-label="Go to latest bar">
              <svg width="11" height="12" aria-hidden="true"><path d="M0 0l8 6-8 6z" fill="#fff" /><rect x="8" width="2" height="12" fill="#fff" /></svg>
            </JumpButton>
            <FixButton aria-label="Fix scale">F</FixButton>
            <Markup aria-hidden="true">
              <g transform="translate(-28 -28)" fill="none" stroke="#ffffff" strokeWidth="3">
                <path d="M551 427L727 499M1123 290L1306 336M554 691L791 653M1105 896L1306 856" strokeLinecap="round" />
                <rect x="496.5" y="699.5" width="405" height="108" />
              </g>
            </Markup>
          </ChartColumn>
        </Body>
      </Window>
    </Desktop>
  );
}
